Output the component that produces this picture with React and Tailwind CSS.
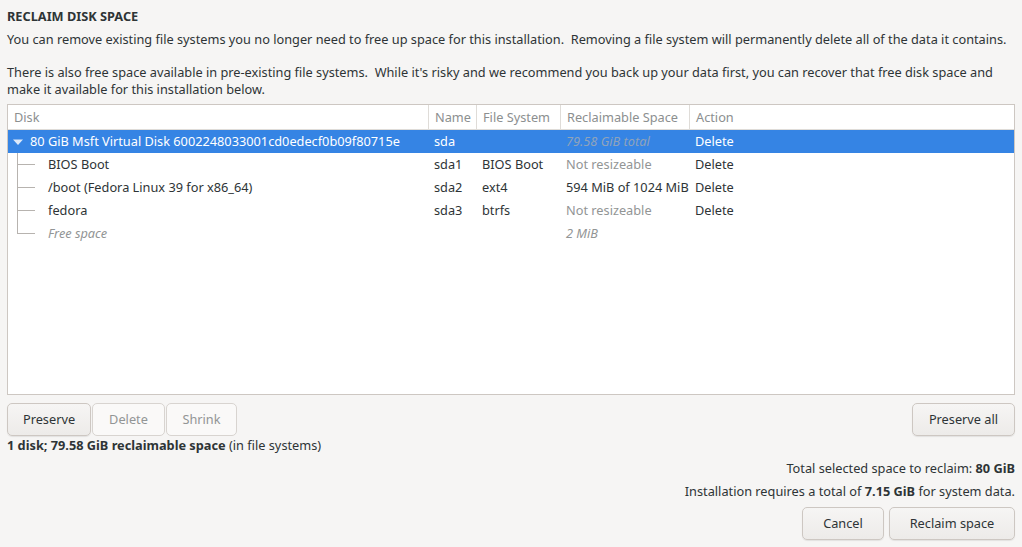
const rows = [
    { name: 'BIOS Boot', dev: 'sda1', fs: 'BIOS Boot', space: 'Not resizeable', dim: true, action: 'Delete' },
    { name: '/boot (Fedora Linux 39 for x86_64)', dev: 'sda2', fs: 'ext4', space: '594 MiB of 1024 MiB', dim: false, action: 'Delete' },
    { name: 'fedora', dev: 'sda3', fs: 'btrfs', space: 'Not resizeable', dim: true, action: 'Delete' },
];

const Btn = ({ children, disabled, className = '' }) => (
    <button
        className={`h-[33px] rounded-[5px] border border-[#cdc7c2] text-[12.75px] ${
            disabled
                ? 'bg-[#faf9f8] text-[#929595] border-[#d8d4d0]'
                : 'bg-gradient-to-b from-[#f6f5f4] to-[#edebe9] text-[#2e3436] shadow-[0_1px_1px_rgba(0,0,0,0.08)]'
        } ${className}`}
    >
        {children}
    </button>
);

const Cols = 'grid grid-cols-[420px_48px_84px_129px_1fr] whitespace-nowrap';

const App = () => {
    return (
        <div
            className="w-[1022px] h-[547px] bg-[#f6f5f4] text-[#2e3436] text-[12.75px] px-[7px] pt-[7px] overflow-hidden"
            style={{ fontFamily: '"Noto Sans", sans-serif' }}
        >
            <div className="font-bold leading-[18px] h-[18px]">RECLAIM DISK SPACE</div>
            <p className="mt-[6px] leading-[17px] whitespace-nowrap">
                You can remove existing file systems you no longer need to free up space for this installation.&nbsp; Removing a file system will permanently delete all of the data it contains.
            </p>
            <p className="mt-[16px] leading-[17px] whitespace-nowrap">
                There is also free space available in pre-existing file systems.&nbsp; While it's risky and we recommend you back up your data first, you can recover that free disk space and<br />
                make it available for this installation below.
            </p>

            <div className="mt-[6px] h-[291px] border border-[#cdc7c2] bg-white">
                <div className={`${Cols} h-[25px] border-b border-[#dfdcd8] text-[#8c8f90] leading-[24px]`}>
                    <div className="pl-[6px]">Disk</div>
                    <div className="pl-[6px] border-l border-[#dfdcd8]">Name</div>
                    <div className="pl-[6px] border-l border-[#dfdcd8]">File System</div>
                    <div className="pl-[6px] border-l border-[#dfdcd8]">Reclaimable Space</div>
                    <div className="pl-[6px] border-l border-[#dfdcd8]">Action</div>
                </div>

                <div className={`${Cols} h-[23px] leading-[23px] bg-[#3584e4] text-white`}>
                    <div className="flex items-center pl-[5px]">
                        <svg width="10" height="10" viewBox="0 0 10 10" className="mr-[7px]">
                            <path d="M0 2.5h10L5 8z" fill="#dbe8f9" />
                        </svg>
                        80 GiB Msft Virtual Disk 6002248033001cd0edecf0b09f80715e
                    </div>
                    <div className="pl-[6px]">sda</div>
                    <div className="pl-[6px]"></div>
                    <div className="pl-[6px] italic text-[#8fa3bb]">79.58 GiB total</div>
                    <div className="pl-[6px]">Delete</div>
                </div>

                {rows.map((r, i) => (
                    <div key={i} className={`${Cols} h-[23px] leading-[23px]`}>
                        <div className="relative pl-[40px]">
                            <span className="absolute left-[9px] top-0 bottom-0 w-px bg-[#b7b3af]" />
                            <span className="absolute left-[9px] top-[11px] w-[18px] h-px bg-[#b7b3af]" />
                            {r.name}
                        </div>
                        <div className="pl-[6px]">{r.dev}</div>
                        <div className="pl-[6px]">{r.fs}</div>
                        <div className={`pl-[6px] ${r.dim ? 'text-[#929595]' : ''}`}>{r.space}</div>
                        <div className="pl-[6px]">{r.action}</div>
                    </div>
                ))}

                <div className={`${Cols} h-[23px] leading-[23px] text-[#929595] italic`}>
                    <div className="relative pl-[40px]">
                        <span className="absolute left-[9px] top-0 h-[12px] w-px bg-[#b7b3af]" />
                        <span className="absolute left-[9px] top-[11px] w-[18px] h-px bg-[#b7b3af]" />
                        Free space
                    </div>
                    <div></div>
                    <div></div>
                    <div className="pl-[6px]">2 MiB</div>
                    <div></div>
                </div>
            </div>

            <div className="mt-[8px] flex items-center">
                <Btn className="w-[84px]">Preserve</Btn>
                <Btn disabled className="w-[73px] ml-px">Delete</Btn>
                <Btn disabled className="w-[71px] ml-px">Shrink</Btn>
                <div className="flex-1" />
                <Btn className="w-[103px]">Preserve all</Btn>
            </div>

            <div className="mt-[1px] leading-[17px]">
                <b>1 disk; 79.58 GiB reclaimable space</b> (in file systems)
            </div>

            <div className="mt-[6px] leading-[17px] text-right">
                Total selected space to reclaim: <b>80 GiB</b>
            </div>
            <div className="mt-[6px] leading-[17px] text-right">
                Installation requires a total of <b>7.15 GiB</b> for system data.
            </div>

            <div className="mt-[7px] flex justify-end gap-[5px]">
                <Btn className="w-[82px]">Cancel</Btn>
                <Btn className="w-[126px]">Reclaim space</Btn>
            </div>
        </div>
    );
};

export default App;
